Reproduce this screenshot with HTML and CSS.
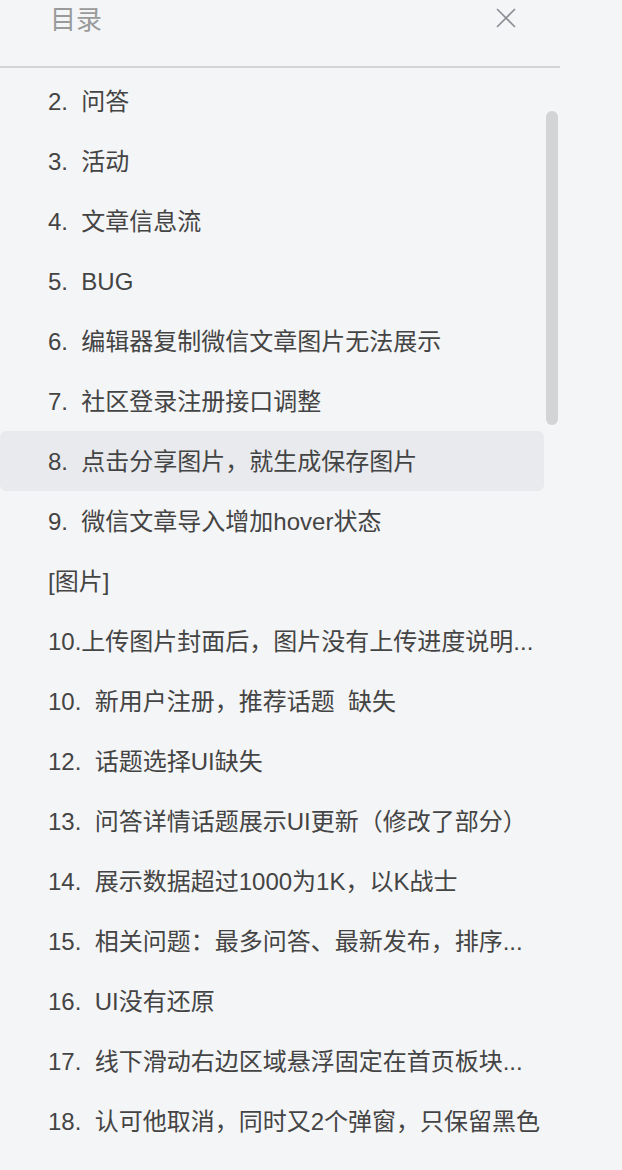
FILE: index.html
```html
<!DOCTYPE html>
<html lang="zh-CN">
<head>
<meta charset="utf-8">
<title>目录</title>
<link rel="stylesheet" href="styles.css">
</head>
<body>
<div class="panel">
  <div class="header">
    <span class="title">目录</span>
    <svg class="close" width="20" height="20" viewBox="0 0 20 20" aria-hidden="true">
      <path d="M1 1 L19 19 M19 1 L1 19" stroke="#8b8e94" stroke-width="1.6" fill="none"/>
    </svg>
  </div>
  <div class="list-wrap">
    <ul class="list">
      <li class="item">2.&nbsp; 问答</li>
      <li class="item">3.&nbsp; 活动</li>
      <li class="item">4.&nbsp; 文章信息流</li>
      <li class="item">5.&nbsp; BUG</li>
      <li class="item">6.&nbsp; 编辑器复制微信文章图片无法展示</li>
      <li class="item">7.&nbsp; 社区登录注册接口调整</li>
      <li class="item active">8.&nbsp; 点击分享图片，就生成保存图片</li>
      <li class="item">9.&nbsp; 微信文章导入增加hover状态</li>
      <li class="item">[图片]</li>
      <li class="item">10.上传图片封面后，图片没有上传进度说明...</li>
      <li class="item">10.&nbsp; 新用户注册，推荐话题&nbsp; 缺失</li>
      <li class="item">12.&nbsp; 话题选择UI缺失</li>
      <li class="item">13.&nbsp; 问答详情话题展示UI更新（修改了部分）</li>
      <li class="item">14.&nbsp; 展示数据超过1000为1K，以K战士</li>
      <li class="item">15.&nbsp; 相关问题：最多问答、最新发布，排序...</li>
      <li class="item">16.&nbsp; UI没有还原</li>
      <li class="item">17.&nbsp; 线下滑动右边区域悬浮固定在首页板块...</li>
      <li class="item">18.&nbsp; 认可他取消，同时又2个弹窗，只保留黑色</li>
    </ul>
    <div class="scrollbar"></div>
  </div>
</div>
</body>
</html>
```

FILE: styles.css
```css
html, body {
  margin: 0;
  padding: 0;
  background: #f4f5f7;
}
body {
  width: 622px;
  height: 1170px;
  overflow: hidden;
  font-family: "Liberation Sans", "Noto Sans CJK SC", sans-serif;
}
.panel {
  width: 560px;
}
.header {
  height: 66px;
  border-bottom: 2px solid #d2d3d5;
  display: flex;
  align-items: flex-start;
  justify-content: space-between;
  padding: 0 44px 0 50px;
}
.title {
  font-size: 26px;
  line-height: 40px;
  color: #9a9a9a;
}
.close {
  margin-top: 8px;
}
.list-wrap {
  position: relative;
}
.list {
  list-style: none;
  margin: 0;
  padding: 3px 0 0 0;
}
.item {
  width: 544px;
  height: 60px;
  box-sizing: border-box;
  padding: 2px 0 0 48px;
  font-size: 24px;
  line-height: 58px;
  color: #444444;
  white-space: nowrap;
  border-radius: 6px;
}
.item.active {
  background: #e8eaee;
}
.scrollbar {
  position: absolute;
  left: 546px;
  top: 43px;
  width: 12px;
  height: 314px;
  border-radius: 6px;
  background: #d3d4d6;
}
```
